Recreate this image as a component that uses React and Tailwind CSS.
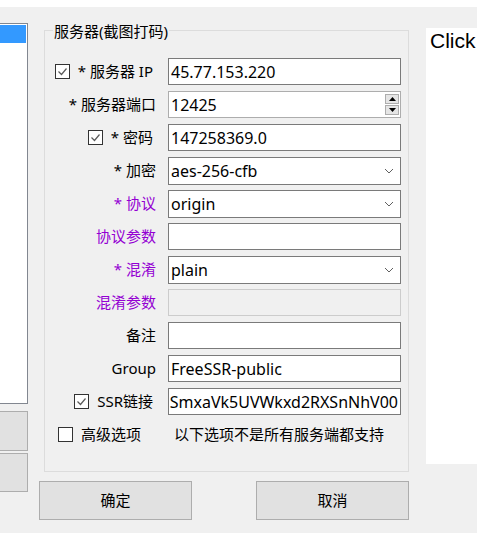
import React from 'react';

const Check = ({ checked }) => (
  <div className="w-[15px] h-[15px] border border-[#333333] bg-white flex items-center justify-center shrink-0">
    {checked && (
      <svg width="13" height="13" viewBox="0 0 13 13">
        <polyline points="2.5,6.5 5.5,9.5 10.5,3.5" fill="none" stroke="#5a5a5a" strokeWidth="1.2" />
      </svg>
    )}
  </div>
);

const Chevron = () => (
  <svg width="10" height="6" viewBox="0 0 10 6" className="mr-[6px] shrink-0">
    <polyline points="1,1 5,5 9,1" fill="none" stroke="#606060" strokeWidth="1" />
  </svg>
);

const TextBox = ({ value = '' }) => (
  <div className="w-[233px] h-[27px] border border-[#7a7a7a] bg-white pl-[2px] flex items-center text-[16px] text-black whitespace-nowrap overflow-hidden">
    {value}
  </div>
);

const Combo = ({ value }) => (
  <div className="w-[233px] h-[28px] border border-[#7a7a7a] bg-white pl-[2px] flex items-center justify-between text-[16px] text-black">
    <span>{value}</span>
    <Chevron />
  </div>
);

const Spinner = ({ value }) => (
  <div className="w-[233px] h-[27px] border border-[#adadad] bg-white pl-[2px] pr-[1px] flex items-center justify-between text-[16px] text-black">
    <span>{value}</span>
    <div className="flex flex-col gap-[1px]">
      <div className="w-[14px] h-[10px] bg-[#e5e5e5] border border-[#adadad] flex items-center justify-center">
        <svg width="7" height="4" viewBox="0 0 7 4"><polygon points="3.5,0 7,4 0,4" fill="#000" /></svg>
      </div>
      <div className="w-[14px] h-[10px] bg-[#e5e5e5] border border-[#adadad] flex items-center justify-center">
        <svg width="7" height="4" viewBox="0 0 7 4"><polygon points="0,0 7,0 3.5,4" fill="#000" /></svg>
      </div>
    </div>
  </div>
);

const Row = ({ label, children, purple, check, checked }) => (
  <div className="flex items-center h-[27px]">
    <div className={`w-[111px] flex items-center justify-end gap-[8px] text-[15px] whitespace-nowrap ${check ? 'pr-[3px]' : ''} ${purple ? 'text-[#9400d3]' : 'text-black'}`}>
      {check && <Check checked={checked} />}
      <span>{label}</span>
    </div>
    <div className="ml-[12px]">{children}</div>
  </div>
);

export default function App() {
  return (
    <div className="w-[477px] h-[533px] bg-[#f0f0f0] overflow-hidden font-['Noto_Sans','Noto_Sans_CJK_SC',sans-serif] leading-none">
      <div className="h-[7px] bg-white" />
      <div className="flex items-start">
        {/* left list + buttons */}
        <div className="w-[28px] shrink-0 mt-[16px] flex flex-col">
          <div className="h-[381px] border border-l-0 border-[#828790] bg-white pt-[1px]">
            <div className="h-[18px] mr-[1px] bg-[#3399ff]" />
          </div>
          <div className="mt-[7px] h-[40px] bg-[#e1e1e1] border border-l-0 border-[#adadad]" />
          <div className="mt-[2px] h-[39px] bg-[#e1e1e1] border border-l-0 border-[#adadad]" />
        </div>

        {/* server group + buttons */}
        <div className="ml-[11px] w-[370px] shrink-0 flex flex-col">
          <div className="ml-[5px] mt-[23px] w-[365px] h-[442px] border border-[#dcdcdc] relative pt-[27px]">
            <div className="absolute left-[8px] top-[-9px] bg-[#f0f0f0] px-[1px] text-[15px] text-black leading-[18px]">
              服务器(截图打码)
            </div>
            <div className="flex flex-col gap-[6px]">
              <Row label="* 服务器 IP" check checked><TextBox value="45.77.153.220" /></Row>
              <Row label="* 服务器端口"><Spinner value="12425" /></Row>
              <Row label="* 密码" check checked><TextBox value="147258369.0" /></Row>
              <Row label="* 加密"><Combo value="aes-256-cfb" /></Row>
              <Row label="* 协议" purple><Combo value="origin" /></Row>
              <Row label="协议参数" purple><TextBox /></Row>
              <Row label="* 混淆" purple><Combo value="plain" /></Row>
              <Row label="混淆参数" purple>
                <div className="w-[233px] h-[27px] border border-[#cccccc] bg-[#f0f0f0]" />
              </Row>
              <Row label="备注"><TextBox /></Row>
              <Row label="Group"><TextBox value="FreeSSR-public" /></Row>
              <Row label="SSR链接" check checked>
                <div className="w-[233px] h-[27px] border border-[#7a7a7a] bg-white pr-[2px] flex items-center justify-end text-[16px] text-black whitespace-nowrap overflow-hidden">
                  <span>uSmxaVk5UVWkxd2RXSnNhV00</span>
                </div>
              </Row>
              <div className="flex items-center h-[27px]">
                <div className="w-[111px] pl-[13px] flex items-center gap-[8px] text-[15px] text-black whitespace-nowrap">
                  <Check />
                  <span>高级选项</span>
                </div>
                <div className="ml-[18px] text-[15px] text-black whitespace-nowrap">以下选项不是所有服务端都支持</div>
              </div>
            </div>
          </div>
          <div className="mt-[9px] flex justify-between">
            <button className="w-[153px] h-[39px] bg-[#e1e1e1] border border-[#adadad] text-[15px] text-black">确定</button>
            <button className="w-[153px] h-[39px] bg-[#e1e1e1] border border-[#adadad] text-[15px] text-black">取消</button>
          </div>
        </div>

        {/* right panel */}
        <div className="ml-[17px] mt-[21px] flex-1 h-[436px] bg-white pl-[4px] pt-[1px]">
          <span className="font-['Liberation_Sans',Arial,sans-serif] text-[21px] leading-[24px] text-black whitespace-nowrap">Click</span>
        </div>
      </div>
    </div>
  );
}
